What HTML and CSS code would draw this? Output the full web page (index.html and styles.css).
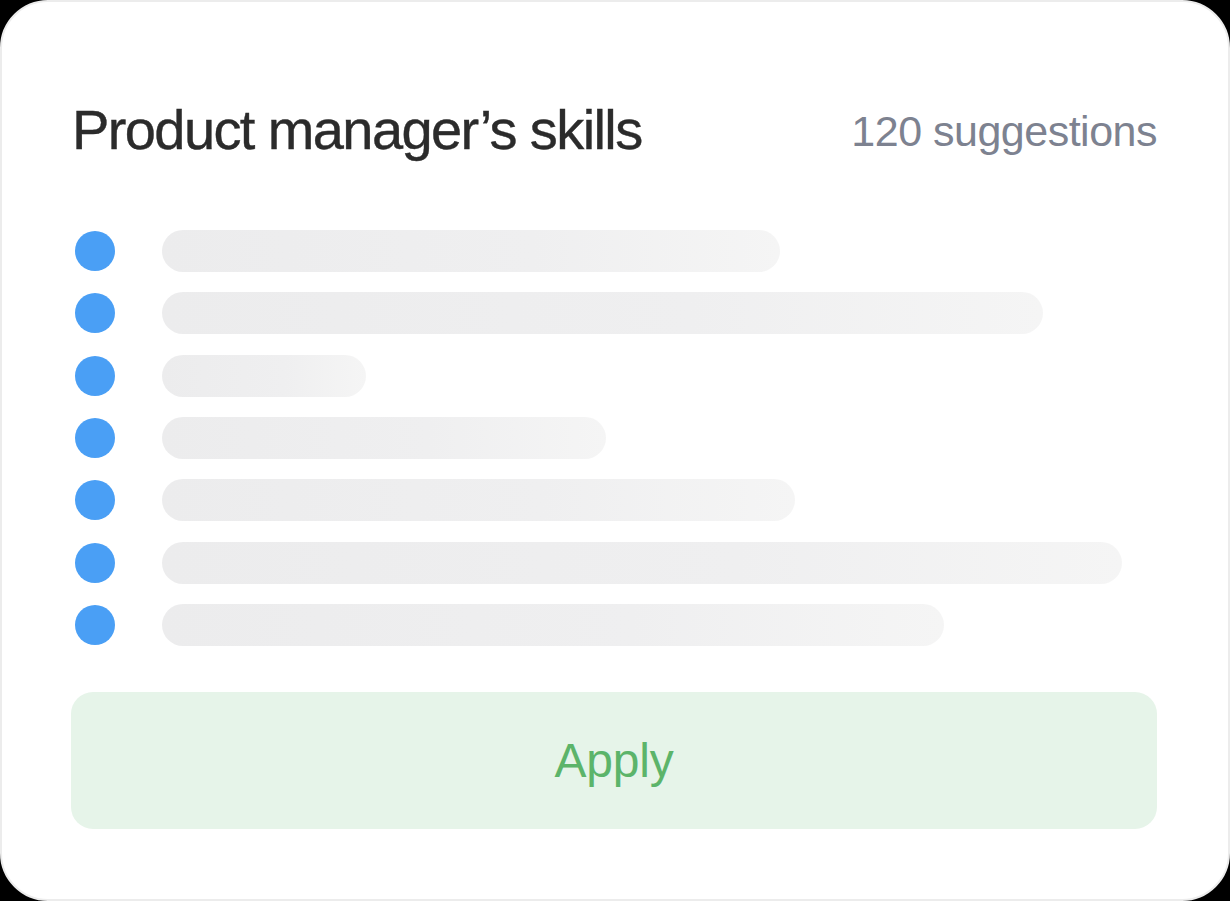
FILE: index.html
```html
<!DOCTYPE html>
<html>
<head>
<meta charset="utf-8">
<link rel="stylesheet" href="styles.css">
</head>
<body>
<div class="card">
  <div class="header">
    <h1 class="title">Product manager’s skills</h1>
    <span class="count">120 suggestions</span>
  </div>
  <ul class="list">
    <li class="row"><span class="dot"></span><span class="bar" style="width:618px"></span></li>
    <li class="row"><span class="dot"></span><span class="bar" style="width:881px"></span></li>
    <li class="row"><span class="dot"></span><span class="bar" style="width:204px"></span></li>
    <li class="row"><span class="dot"></span><span class="bar" style="width:444px"></span></li>
    <li class="row"><span class="dot"></span><span class="bar" style="width:633px"></span></li>
    <li class="row"><span class="dot"></span><span class="bar" style="width:960px"></span></li>
    <li class="row"><span class="dot"></span><span class="bar" style="width:782px"></span></li>
  </ul>
  <button class="apply">Apply</button>
</div>
</body>
</html>
```
FILE: styles.css
```css
html, body {
  margin: 0;
  padding: 0;
  background: #000;
}
.card {
  box-sizing: border-box;
  width: 1230px;
  height: 901px;
  background: #fff;
  border: 2px solid #ececec;
  border-radius: 48px;
  padding: 0 71px 0 69px;
  display: flex;
  flex-direction: column;
  font-family: "Liberation Sans", Arial, sans-serif;
}
.header {
  display: flex;
  justify-content: space-between;
  align-items: flex-start;
  height: 228px;
  padding-left: 1px;
  flex: none;
}
.title {
  margin: 99.5px 0 0 0;
  font-weight: 400;
  font-size: 56px;
  letter-spacing: -1.6px;
  color: #2b2b2b;
  line-height: 1;
  -webkit-text-stroke: 0.4px #2b2b2b;
}
.count {
  margin-top: 108.3px;
  font-size: 43px;
  line-height: 1;
  color: #7d8290;
  letter-spacing: -0.5px;
}
.list {
  list-style: none;
  margin: 0;
  padding: 0;
  display: flex;
  flex-direction: column;
  gap: 20.33px;
}
.row {
  display: flex;
  align-items: center;
  height: 42px;
}
.dot {
  width: 40px;
  height: 40px;
  border-radius: 50%;
  background: #4a9ff5;
  margin-left: 4px;
  margin-right: 47px;
  flex: none;
}
.bar {
  height: 42px;
  border-radius: 21px;
  background: linear-gradient(90deg, #ececed 0%, #efeff0 60%, #f5f5f5 100%);
}
.apply {
  margin-top: 46px;
  height: 137px;
  border: none;
  border-radius: 22px;
  background: #e6f4e9;
  color: #5cb46a;
  font-family: "Liberation Sans", Arial, sans-serif;
  font-size: 48px;
  letter-spacing: -0.2px;
  margin-left: 0;
  margin-right: 0;
  padding: 0;
}
```
